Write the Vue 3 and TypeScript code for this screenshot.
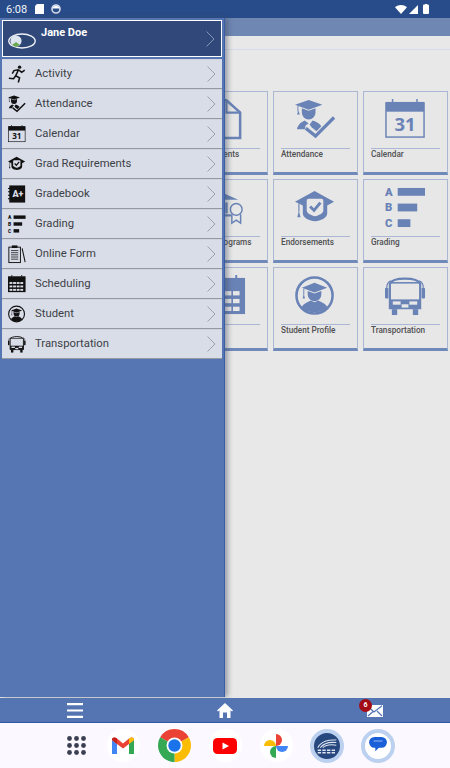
<script setup lang="ts">
import { h } from 'vue'

type Part = [string, Record<string, string | number>, string?]
const S = (w: number) => ({ fill: 'none', stroke: 'currentColor', 'stroke-width': w })
const icons: Record<string, Part[]> = {
  activity: [
    ['circle', { cx: 27, cy: 5, r: 4 }],
    ['path', { d: 'M24 12L18 25M24 11L32 17L39 12M24 11L14 13L10 20M18 25L27 30L24 41M18 25L13 32L2 31', ...S(3.6) }],
  ],
  attendance: [
    ['path', { d: 'M0 6L14 1L28 6L14 11Z' }],
    ['path', { d: 'M3 7V13', ...S(1) }],
    ['path', { d: 'M2 16H5L3.5 12Z' }],
    ['path', { d: 'M7 9.5L14 12L21 9.5V14A7 7 0 0 1 7 14Z' }],
    ['path', { d: 'M2 31C3 26 6 24 10 22L14 25L11 27L10 31Z' }],
    ['path', { d: 'M18 22C22 23 25 25 27 28L22 33L17 29L15 26Z' }],
    ['path', { d: 'M11 30L21 38L40 19', ...S(3.4) }],
  ],
  calendar: [
    ['rect', { x: 1, y: 4, width: 39, height: 35, ...S(1.5) }],
    ['rect', { x: 1, y: 3, width: 39, height: 10 }],
    ['rect', { x: 7, y: 0, width: 1.5, height: 4 }],
    ['rect', { x: 32, y: 0, width: 1.5, height: 4 }],
    ['text', { x: 20.5, y: 33, 'text-anchor': 'middle', 'font-size': 19, 'font-weight': 700, 'font-family': 'Open Sans, sans-serif' }, '31'],
  ],
  grading: [
    ['text', { x: 0, y: 9, 'font-size': 11.5, 'font-weight': 900, 'font-family': 'Roboto, sans-serif' }, 'A'],
    ['rect', { x: 13, y: 1, width: 28, height: 8 }],
    ['text', { x: 0, y: 25, 'font-size': 11.5, 'font-weight': 900, 'font-family': 'Roboto, sans-serif' }, 'B'],
    ['rect', { x: 13, y: 17, width: 20, height: 8 }],
    ['text', { x: 0, y: 41, 'font-size': 11.5, 'font-weight': 900, 'font-family': 'Roboto, sans-serif' }, 'C'],
    ['rect', { x: 13, y: 33, width: 13, height: 8 }],
  ],
  endorse: [
    ['path', { d: 'M0 15L20 4L40 15L33 19V27C33 32 26 35 20.5 35C15 35 8 32 8 27V19Z' }],
    ['path', { d: 'M14 12H27A2 2 0 0 1 29 14V24C29 27 24 29 20.5 30C17 29 12 27 12 24V14A2 2 0 0 1 14 12Z', class: 'ib' }],
    ['path', { d: 'M15.5 20L19.5 24L26 16', ...S(3) }],
    ['path', { d: 'M4 17V25', ...S(1.2) }],
    ['path', { d: 'M2.4 31H5.6L4 24Z' }],
  ],
  student: [
    ['circle', { cx: 20, cy: 21, r: 18.5, ...S(2.6) }],
    ['path', { d: 'M7 13L20 8L33 13L20 18Z' }],
    ['path', { d: 'M13 16.5L20 19L27 16.5V20A7 7 0 0 1 13 20Z' }],
    ['path', { d: 'M9 14V20', ...S(1) }],
    ['path', { d: 'M7.8 24H10.2L9 19Z' }],
    ['path', { d: 'M7 33C8 29 13 28 16 26L20 28L24 26C27 28 32 29 33 33C30 37 25 38 20 38C15 38 10 37 7 33Z' }],
  ],
  bus: [
    ['rect', { x: 0, y: 13, width: 3.5, height: 11, rx: 1 }],
    ['rect', { x: 37.5, y: 13, width: 3.5, height: 11, rx: 1 }],
    ['path', { d: 'M1.7 13C2 9 3 7 6 6M39.3 13C39 9 38 7 35 6', ...S(1.2) }],
    ['path', { d: 'M5 9C8 2 33 2 36 9V34H5Z', ...S(2.2) }],
    ['path', { d: 'M5 8H36', ...S(1.6) }],
    ['path', { d: 'M5 25H36V34H5Z' }],
    ['rect', { x: 8, y: 27, width: 8, height: 3.4, class: 'ib' }],
    ['rect', { x: 25, y: 27, width: 8, height: 3.4, class: 'ib' }],
    ['rect', { x: 17, y: 30, width: 7, height: 3.4, class: 'ib' }],
    ['rect', { x: 7, y: 35, width: 5.5, height: 6 }],
    ['rect', { x: 28.5, y: 35, width: 5.5, height: 6 }],
  ],
  book: [
    ['rect', { x: 3, y: 1, width: 37, height: 40 }],
    ['path', { d: 'M0 8H6M0 16H6M0 24H6M0 32H6', ...S(2.4) }],
    ['text', { x: 23, y: 29, 'text-anchor': 'middle', 'font-size': 21, 'font-weight': 900, 'font-family': 'Roboto, sans-serif', class: 'ibt' }, 'A+'],
  ],
  form: [
    ['rect', { x: 2, y: 5, width: 27, height: 36, ...S(2.2) }],
    ['rect', { x: 9, y: 1, width: 13, height: 6 }],
    ['path', { d: 'M7 13H24M7 18H24M7 23H24M7 28H24M7 33H24', ...S(1.8) }],
    ['path', { d: 'M33 8L40 40', ...S(2.4) }],
  ],
  sched: [
    ['rect', { x: 0, y: 3, width: 41, height: 37 }],
    ['rect', { x: 8, y: 0, width: 2, height: 4 }],
    ['rect', { x: 31, y: 0, width: 2, height: 4 }],
    ...[16.5, 24.5, 32.5].flatMap((y) => [3.5, 11.9, 20.3, 28.7].map((x): Part => ['rect', { x, y, width: 6.7, height: 4.4, class: 'ib' }])),
  ],
  doc: [
    ['path', { d: 'M6 1.3H22L36 14V40H6Z', ...S(2.6) }],
    ['path', { d: 'M22 1.3V14H36', ...S(2.2) }],
  ],
  programs: [
    ['path', { d: 'M2 13L18 6L34 13Z' }],
    ['path', { d: 'M6 16V27M14 16V27M22 16V27M3 29H27', ...S(2.4) }],
    ['circle', { cx: 32, cy: 23, r: 6, class: 'ib', stroke: 'currentColor', 'stroke-width': 1.5 }],
    ['path', { d: 'M27.5 28V37L32 34L36.5 37V28', ...S(1.5) }],
  ],
}

const Ico = (p: { name: string }) =>
  h('svg', { viewBox: '0 0 42 42', class: 'ico' },
    icons[p.name].map(([t, a, txt]) => h(t, { fill: 'currentColor', ...a }, txt)))
Ico.props = ['name']

const menu = [
  ['Activity', 'activity'], ['Attendance', 'attendance'], ['Calendar', 'calendar'],
  ['Grad Requirements', 'endorse'], ['Gradebook', 'book'], ['Grading', 'grading'],
  ['Online Form', 'form'], ['Scheduling', 'sched'], ['Student', 'student'], ['Transportation', 'bus'],
]
const tiles = [
  ['Assignments', 'doc'], ['Attendance', 'attendance'], ['Calendar', 'calendar'],
  ['Honor Programs', 'programs'], ['Endorsements', 'endorse'], ['Grading', 'grading'],
  ['Schedule', 'sched'], ['Student Profile', 'student'], ['Transportation', 'bus'],
]
const dots = [0, 1, 2].flatMap((r) => [0, 1, 2].map((c) => ({ cx: 2.5 + c * 7, cy: 2.5 + r * 7 })))
</script>

<template>
  <div class="phone">
    <header class="status">
      <span class="time">6:08</span>
      <svg class="st-ic" width="9" height="10" viewBox="0 0 9 10"><path d="M2 0H9V10H0V2Z" fill="#fff" /></svg>
      <svg class="st-ic round" width="10" height="10" viewBox="0 0 10 10"><circle cx="5" cy="5" r="4" fill="none" stroke="#d5dcea" stroke-width="1.6" /><path d="M1.5 4.4H8.5A3.6 3.6 0 0 0 1.5 4.4Z" fill="#fff" /></svg>
      <span class="grow"></span>
      <svg width="12" height="9" viewBox="0 0 12 9"><path d="M0 2.2C3.5-.7 8.5-.7 12 2.2L6 9Z" fill="#fff" /></svg>
      <svg class="sig" width="9" height="9" viewBox="0 0 9 9"><path d="M9 0V9H0Z" fill="#fff" /></svg>
      <svg class="bat" width="6" height="10" viewBox="0 0 6 10"><rect y="0.6" width="6" height="9.4" rx="1" fill="#fff" /><rect x="2" width="2" height="1" fill="#fff" /></svg>
    </header>

    <div class="titlebar"></div>

    <main class="content">
      <div class="rule"></div>
      <section class="grid">
        <article v-for="t in tiles" :key="t[0]" class="tile">
          <Ico :name="t[1]" class="tile-ico" />
          <div class="tile-label">{{ t[0] }}</div>
        </article>
      </section>
    </main>

    <nav class="appbar">
      <span class="slot">
        <svg width="16" height="15" viewBox="0 0 16 15"><path d="M0 1.2H16M0 7.5H16M0 13.8H16" stroke="#fff" stroke-width="2.2" /></svg>
      </span>
      <span class="slot">
        <svg width="16" height="15" viewBox="0 0 16 15"><path d="M8 0L16 7.4L15 8.4L13.5 7.2V15H10V9.5H6V15H2.5V7.2L1 8.4L0 7.4Z" fill="#fff" /></svg>
      </span>
      <span class="slot">
        <span class="mail">
          <svg width="16" height="12" viewBox="0 0 16 12"><path d="M0 0H16V12H0Z" fill="#fff" /><path d="M1 1.5L7 7L15 .8M1 11L6 6.5M15 11L10 6" fill="none" stroke="#5474b2" stroke-width="1.2" /></svg>
          <b class="badge">6</b>
        </span>
      </span>
    </nav>

    <footer class="dock">
      <span class="app first">
        <svg width="19" height="19" viewBox="0 0 19 19"><circle v-for="(d, i) in dots" :key="i" :cx="d.cx" :cy="d.cy" r="2.4" fill="#3b3f52" /></svg>
      </span>
      <span class="app">
        <span class="disc">
          <svg width="22" height="17" viewBox="0 0 22 17">
            <path d="M0 3V17H5V7Z" fill="#4285f4" /><path d="M22 3V17H17V7Z" fill="#34a853" />
            <path d="M0 3C0 0 3 0 5 1.5L11 6.5L17 1.5C19 0 22 0 22 3L17 7L11 11.5L5 7Z" fill="#ea4335" />
            <path d="M0 3C0 0 3 0 5 1.5V7Z" fill="#c5221f" /><path d="M22 3C22 0 19 0 17 1.5V7Z" fill="#fbbc04" />
          </svg>
        </span>
      </span>
      <span class="app">
        <svg width="33" height="33" viewBox="0 0 33 33">
          <path d="M16.5 16.5L2.2 8.3A16.5 16.5 0 0 1 30.8 8.3Z" fill="#ea4335" />
          <path d="M16.5 16.5L30.8 8.3A16.5 16.5 0 0 1 16.5 33Z" fill="#fbbc04" />
          <path d="M16.5 16.5L16.5 33A16.5 16.5 0 0 1 2.2 8.3Z" fill="#34a853" />
          <circle cx="16.5" cy="16.5" r="8" fill="#fff" /><circle cx="16.5" cy="16.5" r="6.2" fill="#1a73e8" />
        </svg>
      </span>
      <span class="app">
        <span class="disc">
          <svg width="24" height="16" viewBox="0 0 24 16"><rect width="24" height="16" rx="4.5" fill="#f00" /><path d="M9.5 4.5L16 8L9.5 11.5Z" fill="#fff" /></svg>
        </span>
      </span>
      <span class="app">
        <span class="disc">
          <svg width="24" height="24" viewBox="0 0 24 24">
            <path d="M12 12H0A6 6 0 0 1 12 12Z" fill="#fbbc04" /><path d="M12 12V0A6 6 0 0 1 12 12Z" fill="#ea4335" />
            <path d="M12 12H24A6 6 0 0 1 12 12Z" fill="#4285f4" /><path d="M12 12V24A6 6 0 0 1 12 12Z" fill="#34a853" />
          </svg>
        </span>
      </span>
      <span class="app">
        <span class="ring marc">
          <svg width="22" height="16" viewBox="0 0 26 18">
            <path d="M2 11C6 4 15 1 24 2M5 11C9 6 16 4 24 5M8 11C11 8 17 7 24 8" fill="none" stroke="#dfe6f2" stroke-width="1.2" />
            <path d="M2 14H24M2 17H24" stroke="#dfe6f2" stroke-width="1.6" stroke-dasharray="4 1.5" />
          </svg>
        </span>
      </span>
      <span class="app">
        <span class="ring msg">
          <svg width="18" height="17" viewBox="0 0 20 19"><path d="M6 0H14A6 6 0 0 1 14 12H11L7 16V12H6A6 6 0 0 1 6 0Z" fill="#1a5fd8" /><path d="M5 4.5H15" stroke="#7ea6ee" stroke-width="1.4" /></svg>
        </span>
      </span>
    </footer>

    <aside class="drawer">
      <div class="profile">
        <svg class="avatar" width="28" height="16" viewBox="0 0 28 16">
          <ellipse cx="14" cy="8" rx="13.2" ry="7" fill="#2d4674" stroke="#eef1f6" stroke-width="1.4" />
          <circle cx="8" cy="8" r="5.6" fill="#dde5ee" />
          <path d="M4 12L8 9L12 12L8 14Z" fill="#6aa84f" />
        </svg>
        <span class="name">Jane Doe</span>
        <svg class="chev dim" width="9" height="16" viewBox="0 0 9 16"><path d="M.5.5L8 8L.5 15.5" fill="none" stroke="currentColor" /></svg>
      </div>
      <ul class="menu">
        <li v-for="m in menu" :key="m[0]" class="item">
          <Ico :name="m[1]" class="item-ico" />
          <span class="item-label">{{ m[0] }}</span>
          <svg class="chev" width="9" height="16" viewBox="0 0 9 16"><path d="M.5.5L8 8L.5 15.5" fill="none" stroke="currentColor" /></svg>
        </li>
      </ul>
    </aside>
  </div>
</template>

<style>
html, body { margin: 0; padding: 0; }
</style>

<style scoped>
.phone { position: relative; width: 450px; height: 768px; display: flex; flex-direction: column; overflow: hidden; font-family: Roboto, sans-serif; background: #e8e8e8; }
.status { height: 18px; flex: none; background: #284c8a; color: #fff; display: flex; align-items: center; padding: 0 21px 0 6px; box-sizing: border-box; }
.time { font-size: 11px; color: #f2f4f8; margin-right: 8px; }
.st-ic { margin-right: 7px; }
.grow { flex: 1; }
.sig { margin-left: 2px; margin-right: 5px; }
.titlebar { height: 18px; flex: none; background: #6f87b3; }
.content { flex: 1; min-height: 0; background: #e8e8e8; }
.rule { height: 13px; border-bottom: 1px solid #d2dce9; }
.grid { display: grid; grid-template-columns: repeat(3, 85px); grid-auto-rows: 84px; column-gap: 5px; row-gap: 4px; margin: 41px 0 0 183px; }
.tile { box-sizing: border-box; border: 1px solid #a9b7d2; border-bottom: 3px solid #6f89ba; background: #e7e7e7; padding: 7px 7px 0; display: flex; flex-direction: column; align-items: center; --ib: #e7e7e7; color: #6a83b6; }
.tile-ico { width: 41px; height: 41px; margin: 0 0 8px 0; flex: none; overflow: visible; }
.tile-label { align-self: stretch; border-top: 1px solid #a9b7d2; font-size: 8.2px; font-weight: 500; color: #4f5052; padding-top: 1px; line-height: 9px; white-space: nowrap; }
.ico :deep(.ib) { fill: var(--ib); }
.ico :deep(.ibt) { fill: var(--ib); }
.appbar { height: 25px; flex: none; box-sizing: border-box; background: #5474b2; border-bottom: 1px solid #2c5aa6; display: grid; grid-template-columns: 1fr 1fr 1fr; position: relative; z-index: 2; }
.slot { display: flex; align-items: center; justify-content: center; padding-left: 0; }
.slot:first-child { justify-content: flex-start; padding-left: 67px; }
.slot:last-child { justify-content: flex-end; padding-right: 67px; }
.slot svg { display: block; }
.mail { position: relative; display: block; margin-top: 1px; }
.badge { position: absolute; left: -8px; top: -6px; width: 13px; height: 13px; border-radius: 50%; background: #a30c14; color: #fff; font-size: 7px; font-weight: 700; line-height: 13px; text-align: center; }
.dock { height: 45px; flex: none; background: #fbf9ff; display: flex; justify-content: center; align-items: center; }
.app { width: 51px; display: flex; justify-content: center; align-items: center; }
.first { padding-left: 9px; box-sizing: border-box; }
.app svg { display: block; }
.disc { width: 33px; height: 33px; border-radius: 50%; background: #fff; display: flex; align-items: center; justify-content: center; }
.ring { width: 34px; height: 34px; box-sizing: border-box; border-radius: 50%; border: 4px solid #bcd0f0; display: flex; align-items: center; justify-content: center; }
.marc { background: #27477f; }
.msg { background: #fff; }
.drawer { position: absolute; left: 0; top: 18px; width: 225px; height: 679px; box-sizing: border-box; background: #5575b3; border-right: 1px solid #3a5da6; box-shadow: 3px 0 5px rgba(60, 70, 90, .45); padding: 2px 2px 0 2px; z-index: 1; }
.profile { height: 37px; box-sizing: border-box; background: #30487a; border: 1px solid #fff; display: flex; align-items: center; position: relative; padding-left: 5px; }
.avatar { margin-top: 5px; flex: none; }
.name { font-size: 11px; font-weight: 700; color: #fff; margin-left: 5px; margin-top: -13px; flex: 1; }
.chev { flex: none; color: #9ba1ad; margin: 0 6px 0 0; }
.chev.dim { color: #8695b6; margin-top: 1px; margin-right: 6px; }
.menu { list-style: none; margin: 2px 0 0; padding: 0; }
.item { height: 30px; box-sizing: border-box; background: #d9dde8; border-bottom: 1px solid #96999f; border-top: 1px solid #cfd3dd; display: flex; align-items: center; padding-left: 6px; color: #111; --ib: #d9dde8; }
.item-ico { width: 18px; height: 18px; flex: none; overflow: visible; }
.item-label { flex: 1; margin-left: 9px; margin-bottom: 2px; font-size: 11.3px; color: #3c3f46; }
</style>
